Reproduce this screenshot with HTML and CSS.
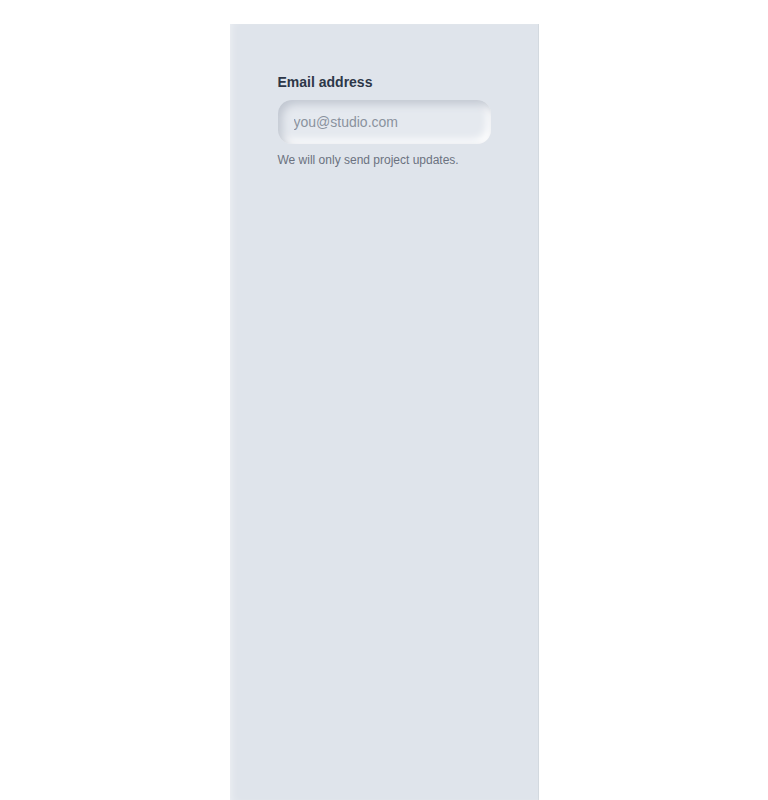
FILE: index.html
```html
<!DOCTYPE html>
<html lang="en">
<head>
<meta charset="utf-8">
<title>Email field</title>
<link rel="stylesheet" href="styles.css">
</head>
<body>
<main class="panel">
  <div class="field">
    <label class="label" for="email">Email address</label>
    <input class="input" id="email" type="email" placeholder="you@studio.com">
    <p class="hint">We will only send project updates.</p>
  </div>
</main>
</body>
</html>
```

FILE: styles.css
```css
html, body {
  margin: 0;
  padding: 0;
  background: #ffffff;
}
body {
  font-family: "Liberation Sans", Arial, sans-serif;
  display: flex;
  justify-content: center;
  padding-top: 24px;
}
.panel {
  width: 309px;
  min-height: calc(100vh - 24px);
  box-sizing: border-box;
  padding: 48px;
  background: #dfe4eb;
  box-shadow: inset 6px 0 10px -6px rgba(255,255,255,0.6), inset -1px 0 0 rgba(200,205,212,0.5);
}
.field {
  display: flex;
  flex-direction: column;
}
.label {
  font-size: 14px;
  line-height: 20px;
  font-weight: 700;
  color: #2d3748;
  margin-bottom: 8px;
}
.input {
  height: 44px;
  box-sizing: border-box;
  border: none;
  outline: none;
  border-radius: 14px;
  padding: 0 16px;
  font-family: inherit;
  font-size: 14px;
  color: #2d3748;
  background: #e5e9ef;
  box-shadow: inset 4px 4px 8px #c0c6d0, inset -4px -4px 8px #ffffff;
}
.input::placeholder {
  color: #8a929e;
}
.hint {
  margin: 8px 0 0;
  font-size: 12px;
  line-height: 16px;
  color: #6b7280;
}
```
